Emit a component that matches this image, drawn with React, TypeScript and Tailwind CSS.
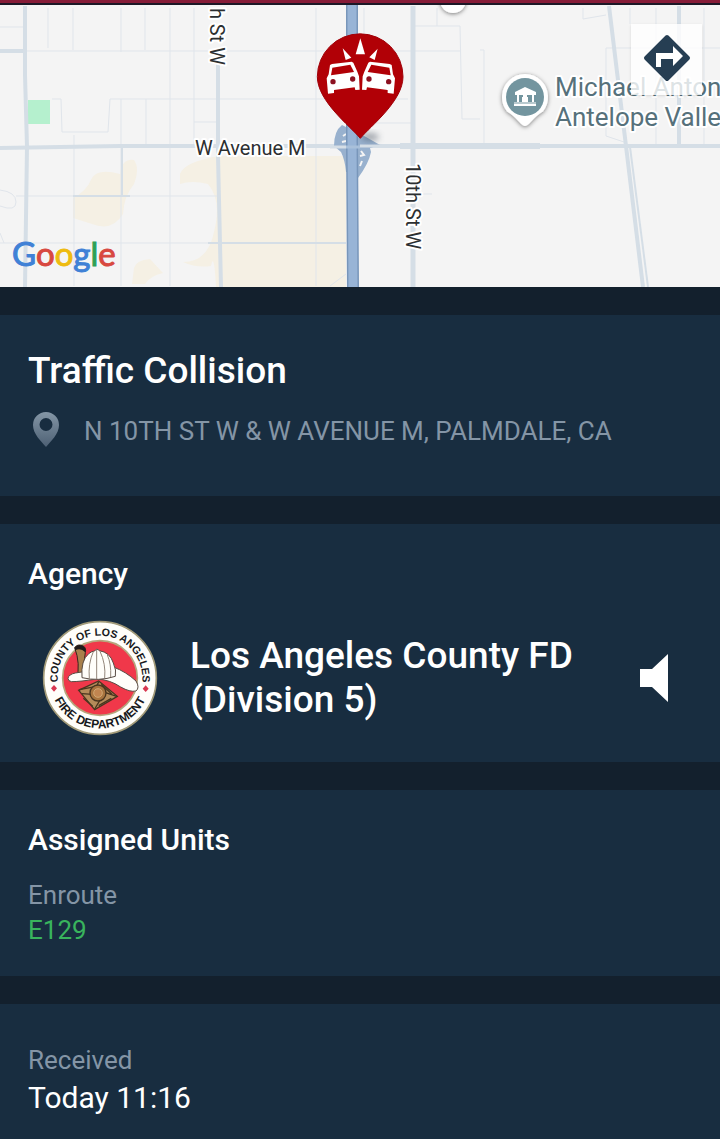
import React from 'react';

interface SectionProps {
  className?: string;
  children: React.ReactNode;
}

const minorRoads = [
  'M0 27H24', 'M48 8V48', 'M73 8V50', 'M121 8V52', 'M145 8V50', 'M170 8V286', 'M194 8V146',
  'M24 51H460', 'M52 99H61L62 132H108L110 99H408', 'M121 99V286', 'M146 99V145', 'M194 122H218',
  'M74 135V286', 'M16 196H218', 'M0 243H216', 'M0 190Q16 192 16 202T0 206', 'M0 233L4 243',
  'M316 8V286', 'M364 8V50', 'M364 123H412', 'M414 26H460L462 119H480', 'M437 8V26',
  'M420 194H432', 'M480 50H484V144', 'M583 8V19L606 15', 'M630 8V24', 'M656 8V144', 'M704 8V144',
  'M606 48V136L624 142', 'M606 48H720', 'M606 122H620', 'M330 286L346 274',
];

const Section: React.FC<SectionProps> = ({ className = '', children }) => (
  <section className={`bg-[#182d40] px-7 ${className}`}>{children}</section>
);

const CollisionPin: React.FC = () => (
  <svg x="310" y="25" width="100" height="120" viewBox="0 0 300 360">
    <path
      d="M151 340C120 303 22 228 22 155A128.500 128.500 0 0 1 279 155C279 228 182 303 151 340Z"
      fill="#b10006"
      stroke="#a00008"
      strokeWidth="3"
    />
    <g fill="#fff">
      <path d="M151 40L137 88H165Z" />
      <path d="M98 70L107 105L124 98Z" />
      <path d="M203 71L178 97L194 105Z" />
    </g>
    {['', 'translate(305 0) scale(-1 1)'].map((transform) => (
      <g key={transform} transform={transform}>
        <path
          d="M60 120L66 117L125 110L130 113L142 140L147 154L149 194L136 195L134 187L72 195V204L54 206L50 160L56 148Z"
          fill="#fff"
        />
        <path d="M67 128L121 119L132 141L63 151Z" fill="#b10006" />
        <circle cx="69" cy="170" r="8" fill="#8c1020" />
        <circle cx="128" cy="162" r="8" fill="#8c1020" />
      </g>
    ))}
  </svg>
);

const IncidentMap: React.FC = () => (
  <svg
    className="block h-[282px] w-full"
    viewBox="0 5 720 282"
    preserveAspectRatio="xMidYMid slice"
    fontFamily="Roboto, sans-serif"
    role="img"
    aria-label="Incident map"
  >
    <defs>
      <filter id="pinShadow" x="-50%" y="-50%" width="200%" height="200%">
        <feDropShadow dx="0" dy="1" stdDeviation="2" floodOpacity="0.5" />
      </filter>
      <filter id="soft" x="-50%" y="-50%" width="200%" height="200%">
        <feGaussianBlur stdDeviation="3" />
      </filter>
    </defs>
    <rect y="5" width="720" height="282" fill="#f4f4f4" />

    {/* terrain */}
    <g fill="#f5f0e4">
      <path d="M219 156H346V287H221Z" />
      <path d="M180 174Q184 162 219 156L222 287H216Q214 250 211 266Q196 268 183 262Q208 262 214 232Q222 200 208 184Q192 180 180 184Z" />
      <path d="M92 178Q98 168 120 174Q122 158 134 160Q140 168 134 184Q124 196 123 214Q112 232 92 224L73 218V198Q86 192 92 178Z" />
      <path d="M134 268Q136 260 150 259L163 273Q150 276 145 284H132Z" />
    </g>
    <rect x="28" y="100" width="22" height="24" fill="#b5f0ce" />

    {/* streets */}
    <g fill="none" stroke="#e0e5eb" strokeWidth="1">
      {minorRoads.map((d) => (
        <path key={d} d={d} />
      ))}
    </g>
    <g fill="none" stroke="#d5dee6">
      <path d="M25 6V75L27 147L25 287" strokeWidth="4" />
      <path d="M0 51H24" strokeWidth="4" />
      <path d="M0 148L120 146H720" strokeWidth="4" />
      <path d="M400 146H540" strokeWidth="6" />
      <path d="M218 60V156L221 287" strokeWidth="4" />
      <path d="M413 6V287" strokeWidth="5" />
      <path d="M609 6L626 146L643 287" strokeWidth="4" />
      <path d="M630 147L648 287" strokeWidth="2" />
      <path d="M679 6V144" strokeWidth="4" />
      <path d="M122 147V196M73 196H130M208 243H346" strokeWidth="2" />
    </g>

    {/* freeway and ramps */}
    <path d="M342 125Q334 131 334 146L341 152Q345 160 346 172H358V178Q369 163 371 152L370 148L380 145L366 137Z" fill="#98b1ce" />
    <g fill="none" stroke="#f4f4f4" strokeWidth="2">
      <path d="M346 134L343 136M346 141L342 142" />
      <path d="M361 151L364 155L360 156M362 161L360 166" />
    </g>
    <path d="M352 5V140L353 287" stroke="#7896ba" strokeWidth="12" fill="none" />
    <path d="M352 5V140L353 287" stroke="#98b4d6" strokeWidth="9" fill="none" />
    <path d="M330 147H346M360 146H380" stroke="#d5dee6" strokeWidth="3" />
    <path d="M346 147H360" stroke="#a9c0da" strokeWidth="3" />
    <ellipse cx="370" cy="137" rx="9" ry="4" fill="#4b5563" opacity="0.5" filter="url(#soft)" />
    <CollisionPin />

    {/* places */}
    <circle cx="453" cy="0" r="13" fill="#fff" filter="url(#pinShadow)" />
    <path
      d="M525 125C522 125 518 117 508 111A22 22 0 1 1 542 111C532 117 528 125 525 125Z"
      fill="#fff"
      stroke="#fff"
      strokeWidth="2"
      filter="url(#pinShadow)"
    />
    <circle cx="525" cy="97" r="19" fill="#73959f" />
    <path
      d="M525 87L515 92V95H517V102H514V106H536V102H534V95H536V92ZM519 95H523V97H522V102H519ZM527 95H532V102H528V97H527Z"
      fill="#fff"
      fillRule="evenodd"
    />
    <path d="M514 103H536" stroke="#73959f" />

    <g fill="#2c2f31" stroke="#fff" strokeWidth="4" strokeLinejoin="round" paintOrder="stroke" fontSize="20">
      <text x="195" y="155">W Avenue M</text>
      <text transform="translate(406 163) rotate(90)">10th St W</text>
      <text transform="translate(210 65) rotate(90)" textAnchor="end">h St W</text>
    </g>
    <g fill="#56717b" stroke="#fff" strokeWidth="4" strokeLinejoin="round" paintOrder="stroke" fontSize="26">
      <text x="555" y="96">Michael Anton</text>
      <text x="555" y="126">Antelope Valle</text>
    </g>
    <text x="12" y="266" fontFamily="Lato, sans-serif" fontSize="33" strokeWidth="1">
      <tspan fill="#4081d6" stroke="#4081d6">G</tspan>
      <tspan fill="#d84840" stroke="#d84840">o</tspan>
      <tspan fill="#eebb10" stroke="#eebb10">o</tspan>
      <tspan fill="#4081d6" stroke="#4081d6">g</tspan>
      <tspan fill="#2da056" stroke="#2da056">l</tspan>
      <tspan fill="#d84840" stroke="#d84840">e</tspan>
    </text>
  </svg>
);

const AgencySeal: React.FC = () => (
  <svg className="size-[116px] shrink-0" viewBox="36 29 348 348" role="img" aria-label="County of Los Angeles Fire Department">
    <defs>
      <path id="sealTop" d="M101 268A127 127 0 1 1 319 268" />
      <path id="sealBottom" d="M59 203A151 151 0 0 0 361 203" />
    </defs>
    <circle cx="210" cy="203" r="169" fill="#fffefa" stroke="#a29a78" strokeWidth="5" />
    <circle cx="210" cy="203" r="112" fill="#f0384a" stroke="#b5a57c" strokeWidth="5" />
    <g fill="#17191c" fontFamily="'Liberation Sans', sans-serif" fontWeight="700" textAnchor="middle">
      <text fontSize="32">
        <textPath href="#sealTop" startOffset="50%">COUNTY OF LOS ANGELES</textPath>
      </text>
      <text fontSize="36">
        <textPath href="#sealBottom" startOffset="50%">FIRE DEPARTMENT</textPath>
      </text>
    </g>
    <path d="M72 224L81 234L72 244L63 234ZM347 225L356 235L347 245L338 235Z" fill="#d83850" />
    {/* helmet */}
    <path d="M134 112Q142 100 158 106Q170 112 166 126L156 204L140 206Q152 160 134 112Z" fill="#a8804c" stroke="#33261c" strokeWidth="3" />
    <path d="M134 112Q142 100 158 106Q170 112 166 126Q152 112 136 120Z" fill="#201b1b" />
    <path
      d="M114 204Q116 192 136 188L250 170Q288 184 318 212Q330 232 318 242Q300 246 272 230Q240 208 200 206Q150 214 124 214Q114 212 114 204Z"
      fill="#fffefa"
      stroke="#594c44"
      strokeWidth="3"
    />
    <path
      d="M156 202Q152 150 176 130Q186 122 194 122Q200 112 208 121Q240 126 250 158Q260 180 256 198Q206 214 156 202Z"
      fill="#fffefa"
      stroke="#594c44"
      strokeWidth="3"
    />
    <path d="M190 124Q174 160 178 204M200 118V206M210 123Q228 160 224 204M232 134Q244 160 242 200" fill="none" stroke="#93877b" strokeWidth="3" />
    {/* badge */}
    <path d="M206 212L262 258L194 298L146 240Z" fill="#b58b5a" stroke="#49351f" strokeWidth="4" />
    <path d="M148 238L200 228L206 214M260 258L224 246L194 296M156 250L188 252M214 222L246 252M206 286L244 264M160 264L188 288" stroke="#49351f" strokeWidth="4" fill="none" />
    <circle cx="204" cy="248" r="24" fill="#a8743f" stroke="#49351f" strokeWidth="4" />
    <circle cx="204" cy="248" r="13" fill="#c18550" stroke="#e0bd88" strokeWidth="2" />
  </svg>
);

const App: React.FC = () => {
  return (
    <div className="flex min-h-screen flex-col bg-[#13202d] font-[Roboto,sans-serif] text-white">
      <header className="h-[5px] border-b-2 border-[#1c1726] bg-[#861c38]" />
      <main className="flex flex-1 flex-col gap-7">
        <div className="relative overflow-hidden">
          <IncidentMap />
          <button
            type="button"
            aria-label="Directions"
            className="absolute top-[19px] right-[18px] flex size-[71px] justify-center bg-white/80 pt-[10px] shadow-sm"
          >
            <svg className="size-12" viewBox="0 0 48 48">
              <path
                d="M24 3L45 24L24 45L3 24Z"
                fill="#263e53"
                stroke="#263e53"
                strokeWidth="4"
                strokeLinejoin="round"
              />
              <path d="M13 33V19H30V12L40 22L30 32V25H18V33Z" fill="#fff" />
            </svg>
          </button>
        </div>

        <Section className="pt-8 pb-12">
          <h1 className="text-[37px] leading-12 font-medium">Traffic Collision</h1>
          <div className="mt-4 flex items-center gap-6 pl-1">
            <svg className="h-[37px] w-7 shrink-0" viewBox="0 0 28 37">
              <defs>
                <linearGradient id="pinFill" x1="0" y1="0" x2="0" y2="1">
                  <stop offset="0" stopColor="#8496a6" />
                  <stop offset="1" stopColor="#4d6074" />
                </linearGradient>
              </defs>
              <path
                d="M14 1A13 13 0 0 0 1 14C1 23 9 30 14 36C19 30 27 23 27 14A13 13 0 0 0 14 1ZM14 7A6 6 0 1 1 14 20A6 6 0 1 1 14 7Z"
                fill="url(#pinFill)"
                fillRule="evenodd"
              />
            </svg>
            <p className="pt-[2px] text-[26px] leading-8 text-[#8495a6]">N 10TH ST W &amp; W AVENUE M, PALMDALE, CA</p>
          </div>
        </Section>

        <Section className="pt-8 pb-[26px]">
          <h2 className="text-[30px] leading-9 font-medium">Agency</h2>
          <div className="mt-7 flex items-center pr-6 pl-[14px]">
            <AgencySeal />
            <p className="ml-8 flex-1 text-[37px] leading-11 font-medium">
              Los Angeles County FD
              <br />
              (Division 5)
            </p>
            <button type="button" aria-label="Play audio" className="shrink-0">
              <svg className="h-12 w-7" viewBox="0 0 28 48" fill="#fff">
                <path d="M0 15H12L28 0V48L12 33H0Z" />
              </svg>
            </button>
          </div>
        </Section>

        <Section className="pt-8 pb-7">
          <h2 className="text-[30px] leading-9 font-medium">Assigned Units</h2>
          <dl className="mt-5 text-[26px] leading-[35px]">
            <dt className="text-[#8495a6]">Enroute</dt>
            <dd className="text-[#39b45d]">E129</dd>
          </dl>
        </Section>

        <Section className="flex-1 pt-9 pb-5">
          <dl>
            <dt className="text-[26px] leading-10 text-[#8495a6]">Received</dt>
            <dd className="text-[30px] leading-9">Today 11:16</dd>
          </dl>
        </Section>
      </main>
    </div>
  );
};

export default App;
